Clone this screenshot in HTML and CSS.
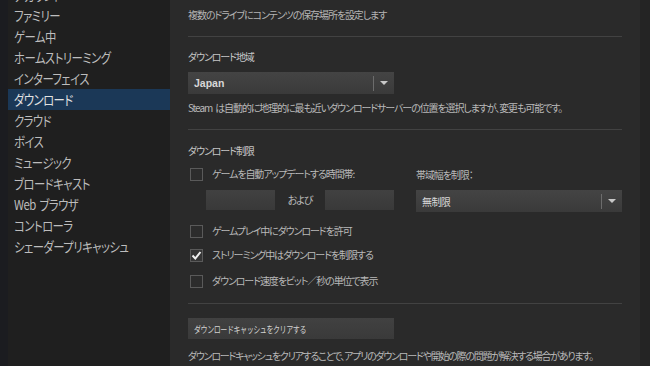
FILE: index.html
```html
<!DOCTYPE html>
<html lang="ja">
<head>
<meta charset="utf-8">
<link rel="stylesheet" href="styles.css">
</head>
<body>
<div class="app">
  <div class="edge"></div>
  <nav class="sidebar">
    <ul class="menu">
      <li><span class="lbl">アカウント</span></li>
      <li><span class="lbl">ファミリー</span></li>
      <li><span class="lbl">ゲーム中</span></li>
      <li><span class="lbl">ホームストリーミング</span></li>
      <li><span class="lbl">インターフェイス</span></li>
      <li class="active"><span class="lbl">ダウンロード</span></li>
      <li><span class="lbl">クラウド</span></li>
      <li><span class="lbl">ボイス</span></li>
      <li><span class="lbl">ミュージック</span></li>
      <li><span class="lbl">ブロードキャスト</span></li>
      <li><span class="lbl">Web ブラウザ</span></li>
      <li><span class="lbl">コントローラ</span></li>
      <li><span class="lbl">シェーダープリキャッシュ</span></li>
    </ul>
  </nav>
  <main class="content">
    <p class="text intro">複数のドライブにコンテンツの保存場所を設定します</p>
    <div class="sep first"></div>
    <h3 class="heading">ダウンロード地域</h3>
    <div class="select region">
      <span class="select-value bold">Japan</span>
      <span class="select-div"></span>
      <span class="select-arrow"></span>
    </div>
    <p class="text note">Steam は自動的に地理的に最も近いダウンロードサーバーの位置を選択しますが、変更も可能です。</p>
    <div class="sep"></div>
    <h3 class="heading limit">ダウンロード制限</h3>
    <div class="grid">
      <div class="col-left">
        <label class="check first-check"><span class="box"></span><span class="text">ゲームを自動アップデートする時間帯:</span></label>
        <div class="times">
          <span class="input"></span>
          <span class="text and">および</span>
          <span class="input"></span>
        </div>
      </div>
      <div class="col-right">
        <p class="text bw-label">帯域幅を制限：</p>
        <div class="select bw">
          <span class="select-value">無制限</span>
          <span class="select-div"></span>
          <span class="select-arrow"></span>
        </div>
      </div>
    </div>
    <label class="check row1"><span class="box"></span><span class="text">ゲームプレイ中にダウンロードを許可</span></label>
    <label class="check row2"><span class="box checked"><svg viewBox="0 0 13 13" width="13" height="13"><polyline points="2.5,6.5 5.3,9.5 10.5,3" fill="none" stroke="#f0f0f0" stroke-width="2"/></svg></span><span class="text">ストリーミング中はダウンロードを制限する</span></label>
    <label class="check row3"><span class="box"></span><span class="text">ダウンロード速度をビット／秒の単位で表示</span></label>
    <div class="sep last"></div>
    <button class="btn"><span class="btn-lbl">ダウンロードキャッシュをクリアする</span></button>
    <p class="text foot">ダウンロードキャッシュをクリアすることで、アプリのダウンロードや開始の際の問題が解決する場合があります。</p>
  </main>
  <div class="rstrip"></div>
</div>
</body>
</html>
```
FILE: styles.css
```css
* { box-sizing: border-box; }
html, body { margin: 0; padding: 0; }
body {
  width: 650px;
  height: 366px;
  overflow: hidden;
  background: #2a2a2a;
  font-family: "Noto Sans CJK JP", "Noto Sans", sans-serif;
  font-feature-settings: "palt";
  color: #b9b9b9;
}
.app { display: flex; height: 366px; }
.edge { width: 8px; background: #1b1c20; flex: none; }
.sidebar { width: 162px; background: #1f1f1f; flex: none; overflow: hidden; }
.menu { list-style: none; margin: -15px 0 0; padding: 0; }
.menu li {
  height: 21px;
  line-height: 21px;
  padding-left: 6px;
  font-size: 13.5px;
  letter-spacing: -0.6px;
  word-spacing: 2px;
  color: #bdbdbd;
  white-space: nowrap;
}
.menu li:first-child { height: 20px; }
.menu li.active { height: 20.5px; background: #1b3857; color: #e2e2e2; }
.lbl { display: inline-block; transform: scaleX(0.84); transform-origin: left center; }
.content {
  width: 470px;
  flex: none;
  padding: 0 18px;
  background: #2a2a2a;
}
.rstrip { flex: 1; background: #242424; }
.text { font-size: 10px; letter-spacing: -1.1px; word-spacing: 2px; line-height: 14px; margin: 0; white-space: nowrap; }
.intro { margin-top: 8px; color: #b4b4b4; }
.foot { margin-top: 10px; letter-spacing: -1.25px; }
.sep { height: 1px; background: #424242; margin-top: 14px; width: 434px; }
.heading { font-size: 10px; letter-spacing: -1.1px; line-height: 14px; margin: 13px 0 0; font-weight: normal; color: #c6c6c6; }
.select {
  display: flex;
  align-items: center;
  height: 22px;
  width: 206px;
  margin-top: 8px;
  background: linear-gradient(#444444, #3a3a3a);
  padding-left: 6px;
}
.select-value { font-size: 10px; letter-spacing: -0.6px; color: #d8d8d8; flex: 1; }
.select-value.bold { font-family: "Liberation Sans", "Noto Sans CJK JP", sans-serif; font-weight: bold; font-size: 10.5px; letter-spacing: 0; }
.select-div { width: 1px; height: 15px; background: #6c6c6c; margin-right: 6px; }
.select-arrow {
  width: 0; height: 0;
  border-left: 4px solid transparent;
  border-right: 4px solid transparent;
  border-top: 4px solid #c8c8c8;
  margin-right: 6px;
}
.note { margin-top: 7px; }
.limit { margin-top: 14px; }
.grid { display: grid; grid-template-columns: 206px 206px; column-gap: 22px; }
.check { display: flex; align-items: center; gap: 9px; height: 14px; padding-left: 2px; }
.box {
  width: 13px; height: 13px;
  border: 1px solid #5a5a5a;
  background: #2c2c2c;
  flex: none;
  display: flex;
}
.box.checked { background: #363636; }
.box svg { display: block; margin: -1px; }
.first-check { margin-top: 9px; }
.times { display: flex; align-items: center; margin-top: 9px; padding-left: 18px; }
.input { width: 69px; height: 20px; background: linear-gradient(#414141, #393939); }
.and { width: 50px; text-align: center; }
.bw-label { margin-top: 10px; }
.bw { margin-top: 8px; }
.row1 { margin-top: 12px; }
.row2 { margin-top: 10px; }
.row3 { margin-top: 12px; }
.last { margin-top: 15px; }
.btn {
  display: block;
  margin-top: 14px;
  width: 206px;
  height: 21px;
  border: none;
  background: linear-gradient(#414141, #3a3a3a);
  color: #d2d2d2;
  font-family: inherit;
  font-size: 9.5px;
  letter-spacing: -0.6px;
  text-align: left;
  padding: 0 6px;
  white-space: nowrap;
}
.btn-lbl { display: inline-block; transform: scaleX(0.74); transform-origin: left center; }
```
